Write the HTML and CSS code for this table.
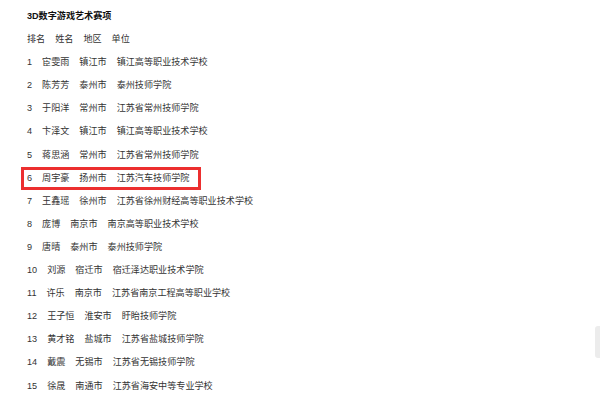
FILE: index.html
```html
<!DOCTYPE html>
<html lang="zh-CN">
<head>
  <meta charset="UTF-8">
  <title>3D数字游戏艺术赛项</title>
  <link rel="stylesheet" href="styles.css">
</head>
<body>
  <div class="list">
    <h3 class="title">3D数字游戏艺术赛项</h3>
    <div class="row"><span>排名</span><span>姓名</span><span>地区</span><span>单位</span></div>
    <div class="row"><span>1</span><span>宦雯雨</span><span>镇江市</span><span>镇江高等职业技术学校</span></div>
    <div class="row"><span>2</span><span>陈芳芳</span><span>泰州市</span><span>泰州技师学院</span></div>
    <div class="row"><span>3</span><span>于阳洋</span><span>常州市</span><span>江苏省常州技师学院</span></div>
    <div class="row"><span>4</span><span>卞泽文</span><span>镇江市</span><span>镇江高等职业技术学校</span></div>
    <div class="row"><span>5</span><span>蒋思涵</span><span>常州市</span><span>江苏省常州技师学院</span></div>
    <!-- highlighted row -->
    <div class="row hl"><span>6</span><span>周宇豪</span><span>扬州市</span><span>江苏汽车技师学院</span></div>
    <div class="row"><span>7</span><span>王鑫瑶</span><span>徐州市</span><span>江苏省徐州财经高等职业技术学校</span></div>
    <div class="row"><span>8</span><span>庞博</span><span>南京市</span><span>南京高等职业技术学校</span></div>
    <div class="row"><span>9</span><span>唐晴</span><span>泰州市</span><span>泰州技师学院</span></div>
    <div class="row"><span>10</span><span>刘源</span><span>宿迁市</span><span>宿迁泽达职业技术学院</span></div>
    <div class="row"><span>11</span><span>许乐</span><span>南京市</span><span>江苏省南京工程高等职业学校</span></div>
    <div class="row"><span>12</span><span>王子恒</span><span>淮安市</span><span>盱眙技师学院</span></div>
    <div class="row"><span>13</span><span>黄才铭</span><span>盐城市</span><span>江苏省盐城技师学院</span></div>
    <div class="row"><span>14</span><span>戴震</span><span>无锡市</span><span>江苏省无锡技师学院</span></div>
    <div class="row"><span>15</span><span>徐晟</span><span>南通市</span><span>江苏省海安中等专业学校</span></div>
  </div>
  <div class="thumb"></div>
</body>
</html>
```

FILE: styles.css
```css
/* page base */
body {
  margin: 0;
  background: #ffffff;
  font-family: "Liberation Sans", "Noto Sans CJK SC", sans-serif;
  font-size: 9.1px;
  color: #333;
  overflow: hidden;
}
.list {
  padding: 5px 0 0 27px;
  line-height: 23.1px;
}
.title {
  margin: 0;
  font-size: 9.1px;
  font-weight: bold;
  color: #111;
}
.row {
  display: flex;
  gap: 10px;
}
/* red frame round row 6 */
.row.hl {
  width: fit-content;
  margin-left: -6px;
  padding: 0 12px 0 6px;
  box-shadow: inset 0 0 0 3px #ec2f2f;
}
/* scrollbar thumb at the right edge */
.thumb {
  position: fixed;
  right: 0;
  top: 326px;
  width: 5px;
  height: 32px;
  background: #ececec;
  border-radius: 3px 0 0 3px;
}
```
